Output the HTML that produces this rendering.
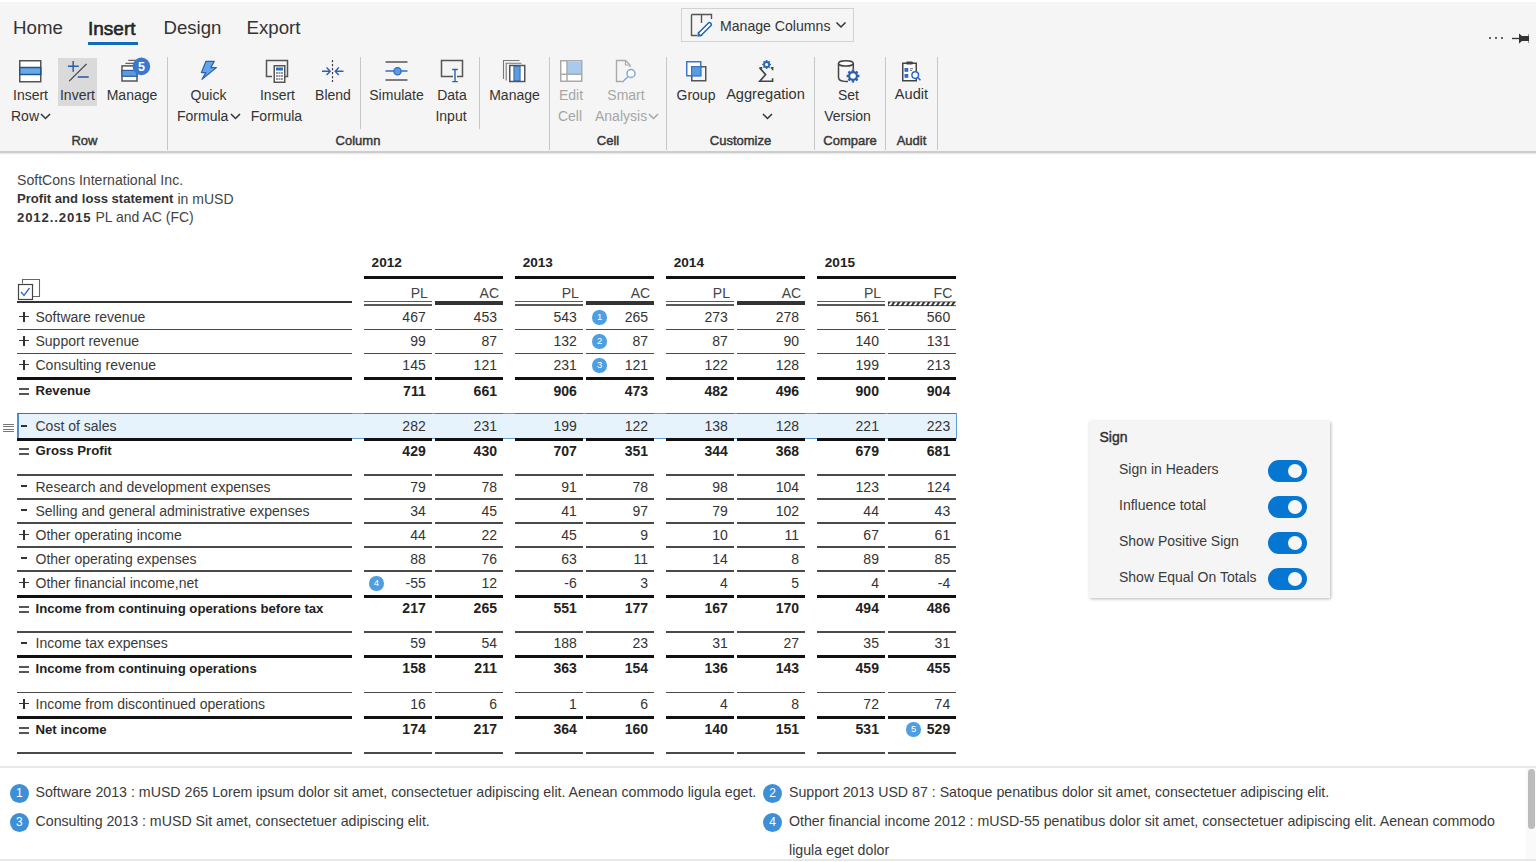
<!DOCTYPE html><html><head><meta charset="utf-8"><style>
html,body{margin:0;padding:0;}
body{width:1536px;height:862px;overflow:hidden;position:relative;background:#fff;font-family:'Liberation Sans',sans-serif;}
.t{position:absolute;white-space:nowrap;}
.r{position:absolute;display:block;}
</style></head><body>
<div class="r" style="left:0px;top:0px;width:1536px;height:151px;background:#f5f5f5;border-top:2px solid #fff;box-sizing:border-box"></div>
<div class="r" style="left:0px;top:151px;width:1536px;height:1.5px;background:#cdcdcd;"></div>
<div class="r" style="left:0px;top:152.5px;width:1536px;height:2.5px;background:linear-gradient(#e6e6e6,#fcfcfc);"></div>
<div class="t" style="left:13px;top:15.12px;font-size:18.7px;line-height:26px;color:#333;">Home</div>
<div class="t" style="left:88px;top:14.52px;font-size:19px;line-height:27px;color:#262626;-webkit-text-stroke:0.6px #262626;">Insert</div>
<div class="r" style="left:88px;top:42px;width:50px;height:3px;background:#0f6cbd;"></div>
<div class="t" style="left:163.5px;top:15.16px;font-size:18.6px;line-height:26px;color:#333;">Design</div>
<div class="t" style="left:246.5px;top:15.12px;font-size:18.7px;line-height:26px;color:#333;">Export</div>
<div class="r" style="left:681px;top:8px;width:173px;height:34px;background:transparent;border:1px solid #d2d2d2;box-sizing:border-box"></div>
<svg class="r" style="left:690px;top:13px;" width="24" height="24" viewBox="0 0 24 24"><path d="M1.5 1.5 V22.5 H7 M1.5 1.5 H21.5 V6 M11.5 1.5 V10" fill="none" stroke="#555" stroke-width="1.4"/><path d="M10.5 20.5 L19.5 11.5" stroke="#1f5fb0" stroke-width="5" stroke-linecap="round"/><path d="M10.5 20.5 L19.5 11.5" stroke="#fff" stroke-width="2.2" stroke-linecap="round"/><path d="M12.3 22.5 L8 23 L8.5 18.7" fill="none" stroke="#1f5fb0" stroke-width="1.2"/></svg>
<div class="t" style="left:720px;top:15.71px;font-size:14.1px;line-height:20px;color:#333;">Manage Columns</div>
<svg class="r" style="left:835px;top:21px;" width="12" height="8" viewBox="0 0 12 8"><path d="M1.5 1.5 L6 6 L10.5 1.5" fill="none" stroke="#333" stroke-width="1.5"/></svg>
<div class="r" style="left:1489.3px;top:37px;width:2px;height:2px;background:#333;border-radius:1px"></div>
<div class="r" style="left:1495px;top:37px;width:2px;height:2px;background:#333;border-radius:1px"></div>
<div class="r" style="left:1500.6px;top:37px;width:2px;height:2px;background:#333;border-radius:1px"></div>
<svg class="r" style="left:1511px;top:33px;" width="19" height="11" viewBox="0 0 19 11"><path d="M1 5.5 H8" stroke="#333" stroke-width="1.3"/><path d="M8 0.5 L11 3 H17.5 V1 H18 V10 H17.5 V8 H11 L8 10.5 Z" fill="#333"/></svg>
<div class="r" style="left:167px;top:57px;width:1px;height:93px;background:#c6c6c6;"></div>
<div class="r" style="left:360px;top:57px;width:1px;height:72px;background:#c6c6c6;"></div>
<div class="r" style="left:479px;top:57px;width:1px;height:72px;background:#c6c6c6;"></div>
<div class="r" style="left:549px;top:57px;width:1px;height:93px;background:#c6c6c6;"></div>
<div class="r" style="left:666px;top:57px;width:1px;height:93px;background:#c6c6c6;"></div>
<div class="r" style="left:814px;top:57px;width:1px;height:93px;background:#c6c6c6;"></div>
<div class="r" style="left:885px;top:57px;width:1px;height:93px;background:#c6c6c6;"></div>
<div class="r" style="left:937px;top:57px;width:1px;height:93px;background:#c6c6c6;"></div>
<div class="t" style="left:24.5px;width:120px;top:132.40px;font-size:13px;line-height:18px;color:#383838;text-align:center;-webkit-text-stroke:0.45px #383838;">Row</div>
<div class="t" style="left:298.0px;width:120px;top:132.40px;font-size:13px;line-height:18px;color:#383838;text-align:center;-webkit-text-stroke:0.45px #383838;">Column</div>
<div class="t" style="left:548.0px;width:120px;top:132.40px;font-size:13px;line-height:18px;color:#383838;text-align:center;-webkit-text-stroke:0.45px #383838;">Cell</div>
<div class="t" style="left:680.5px;width:120px;top:132.40px;font-size:13px;line-height:18px;color:#383838;text-align:center;-webkit-text-stroke:0.45px #383838;">Customize</div>
<div class="t" style="left:790.0px;width:120px;top:132.40px;font-size:13px;line-height:18px;color:#383838;text-align:center;-webkit-text-stroke:0.45px #383838;">Compare</div>
<div class="t" style="left:851.5px;width:120px;top:132.40px;font-size:13px;line-height:18px;color:#383838;text-align:center;-webkit-text-stroke:0.45px #383838;">Audit</div>
<svg class="r" style="left:18px;top:59px;" width="25" height="24" viewBox="0 0 25 24"><rect x="1.75" y="1.75" width="21" height="21" fill="#fff" stroke="#555" stroke-width="1.5"/><rect x="1.75" y="8.5" width="21" height="7" fill="#69a9e6" stroke="#24548f" stroke-width="1.5"/></svg>
<div class="t" style="left:13px;top:84.65px;font-size:14px;line-height:20px;color:#333;">Insert</div>
<div class="t" style="left:11px;top:106.45px;font-size:14px;line-height:20px;color:#333;">Row</div>
<svg class="r" style="left:40px;top:113px;" width="11" height="7" viewBox="0 0 11 7"><path d="M1 1 L5.5 5.5 L10 1" fill="none" stroke="#333" stroke-width="1.5"/></svg>
<div class="r" style="left:58px;top:58px;width:39px;height:48px;background:#dadada;"></div>
<svg class="r" style="left:66px;top:59px;" width="25" height="24" viewBox="0 0 25 24"><path d="M1.9 7.3 H12.8 M7.2 2 V12.7" stroke="#2a5ea8" stroke-width="1.5"/><path d="M3.2 22.1 L20.6 4.9" stroke="#444" stroke-width="1.3"/><path d="M11.8 18 H22.7" stroke="#2a5ea8" stroke-width="1.6"/></svg>
<div class="t" style="left:47.5px;width:60px;top:84.65px;font-size:14px;line-height:20px;color:#333;text-align:center;">Invert</div>
<svg class="r" style="left:119px;top:57px;" width="34" height="28" viewBox="0 0 34 28"><path d="M9.3 3.4 H17 M6.4 6.3 H16" stroke="#666" stroke-width="1.3"/><rect x="3" y="8.9" width="15" height="15.1" fill="#fff" stroke="#555" stroke-width="1.5"/><rect x="3" y="13.4" width="15" height="5.9" fill="#5b9be0" stroke="#2f5f9a" stroke-width="1.2"/><circle cx="22.4" cy="9.4" r="8.8" fill="#3a78d0"/><text x="22.6" y="13.9" text-anchor="middle" font-family="Liberation Sans" font-weight="700" font-size="12.5" fill="#fff">5</text></svg>
<div class="t" style="left:92.0px;width:80px;top:84.65px;font-size:14px;line-height:20px;color:#333;text-align:center;">Manage</div>
<svg class="r" style="left:199px;top:59px;" width="20" height="23" viewBox="0 0 20 23"><path d="M7 2.3 H15.3 L11.8 8.6 H17.4 L3 20.3 L6.8 13.6 H2.4 Z" fill="#62a6ea" stroke="#2a62b0" stroke-width="1.2" stroke-linejoin="round"/></svg>
<div class="t" style="left:168.5px;width:80px;top:84.65px;font-size:14px;line-height:20px;color:#333;text-align:center;">Quick</div>
<div class="t" style="left:177px;top:106.45px;font-size:14px;line-height:20px;color:#333;">Formula</div>
<svg class="r" style="left:230px;top:113px;" width="11" height="7" viewBox="0 0 11 7"><path d="M1 1 L5.5 5.5 L10 1" fill="none" stroke="#333" stroke-width="1.5"/></svg>
<svg class="r" style="left:265px;top:59px;" width="25" height="25" viewBox="0 0 25 25"><path d="M7 17.5 H1.5 V1.5 H22.5 V17.5 H19" fill="none" stroke="#555" stroke-width="1.5"/><rect x="9.25" y="6.75" width="10.5" height="16.5" fill="#fff" stroke="#555" stroke-width="1.5"/><rect x="11" y="8.5" width="7" height="3" fill="#2e6bc6"/><g fill="#999"><rect x="11" y="13" width="2" height="2"/><rect x="13.5" y="13" width="2" height="2"/><rect x="16" y="13" width="2" height="2"/><rect x="11" y="16" width="2" height="2"/><rect x="13.5" y="16" width="2" height="2"/><rect x="16" y="16" width="2" height="2"/><rect x="11" y="19" width="2" height="2"/><rect x="13.5" y="19" width="2" height="2"/><rect x="16" y="19" width="2" height="2"/></g></svg>
<div class="t" style="left:237.5px;width:80px;top:84.65px;font-size:14px;line-height:20px;color:#333;text-align:center;">Insert</div>
<div class="t" style="left:236.5px;width:80px;top:106.45px;font-size:14px;line-height:20px;color:#333;text-align:center;">Formula</div>
<svg class="r" style="left:320px;top:59px;" width="26" height="24" viewBox="0 0 26 24"><path d="M12.5 1 V23" stroke="#4a3a3a" stroke-width="1.2" stroke-dasharray="2.2 1.8"/><path d="M2 12.2 H10.2 M6.6 8.4 L10.2 12.2 L6.6 16" fill="none" stroke="#2a62b0" stroke-width="1.4"/><path d="M23.5 12.2 H15.2 M18.8 8.4 L15.2 12.2 L18.8 16" fill="none" stroke="#2a62b0" stroke-width="1.4"/></svg>
<div class="t" style="left:293.0px;width:80px;top:84.65px;font-size:14px;line-height:20px;color:#333;text-align:center;">Blend</div>
<svg class="r" style="left:384px;top:59px;" width="25" height="24" viewBox="0 0 25 24"><path d="M1.5 3 H23.5 M1.5 21 H23.5" stroke="#555" stroke-width="1.5"/><path d="M1.5 12 H23.5" stroke="#2e6bc6" stroke-width="1.5"/><circle cx="13.5" cy="12.2" r="3.6" fill="#5b9be0" stroke="#2e6bc6" stroke-width="1.3"/></svg>
<div class="t" style="left:356.5px;width:80px;top:84.65px;font-size:14px;line-height:20px;color:#333;text-align:center;">Simulate</div>
<svg class="r" style="left:440px;top:59px;" width="25" height="25" viewBox="0 0 25 25"><path d="M13 17.5 H1.5 V1.5 H22.5 V17.5 H17" fill="none" stroke="#555" stroke-width="1.5"/><path d="M15 10.5 V22.5 M12.2 10.5 H17.8 M12.2 22.6 H17.8" stroke="#2a62b0" stroke-width="1.4"/></svg>
<div class="t" style="left:412.0px;width:80px;top:84.65px;font-size:14px;line-height:20px;color:#333;text-align:center;">Data</div>
<div class="t" style="left:411.0px;width:80px;top:106.45px;font-size:14px;line-height:20px;color:#333;text-align:center;">Input</div>
<svg class="r" style="left:501px;top:58px;" width="27" height="26" viewBox="0 0 27 26"><path d="M2.5 21 V2.5 H18.5 M5.2 22.5 V5.2 H20.5" fill="none" stroke="#777" stroke-width="1.1"/><rect x="8.75" y="7.5" width="15" height="16" fill="#fff" stroke="#555" stroke-width="1.5"/><rect x="12.9" y="8.2" width="6.2" height="14.6" fill="#5b9be0" stroke="#2f5f9a" stroke-width="0.9"/></svg>
<div class="t" style="left:474.5px;width:80px;top:84.65px;font-size:14px;line-height:20px;color:#333;text-align:center;">Manage</div>
<svg class="r" style="left:559px;top:59px;" width="25" height="24" viewBox="0 0 25 24"><rect x="1.75" y="1.75" width="21" height="20.5" fill="#fff" stroke="#aaa" stroke-width="1.5"/><rect x="8" y="2.5" width="14" height="12.5" fill="#a8cbed"/><path d="M8 1.75 V22 M1.75 15.25 H22.5" stroke="#aaa" stroke-width="1.5"/></svg>
<div class="t" style="left:531.0px;width:80px;top:84.65px;font-size:14px;line-height:20px;color:#a6a6a6;text-align:center;">Edit</div>
<div class="t" style="left:530.0px;width:80px;top:106.45px;font-size:14px;line-height:20px;color:#a6a6a6;text-align:center;">Cell</div>
<svg class="r" style="left:614px;top:59px;" width="24" height="24" viewBox="0 0 24 24"><path d="M10 22.5 H2.5 V1.5 H11.5 L16 6 V8" fill="none" stroke="#aaa" stroke-width="1.4"/><path d="M11.5 1.5 V6 H16" fill="none" stroke="#aaa" stroke-width="1.2"/><circle cx="17" cy="14.5" r="4" fill="#fff" stroke="#7fa8d8" stroke-width="1.5"/><path d="M14 17.5 L9.5 22" stroke="#7fa8d8" stroke-width="1.5"/></svg>
<div class="t" style="left:586.0px;width:80px;top:84.65px;font-size:14px;line-height:20px;color:#a6a6a6;text-align:center;">Smart</div>
<div class="t" style="left:595px;top:106.45px;font-size:14px;line-height:20px;color:#a6a6a6;">Analysis</div>
<svg class="r" style="left:648px;top:113px;" width="11" height="7" viewBox="0 0 11 7"><path d="M1 1 L5.5 5.5 L10 1" fill="none" stroke="#a6a6a6" stroke-width="1.5"/></svg>
<svg class="r" style="left:684px;top:59px;" width="24" height="24" viewBox="0 0 24 24"><rect x="2.75" y="2.75" width="14" height="14" fill="#fff" stroke="#3a78d0" stroke-width="1.5"/><rect x="7.75" y="7.75" width="14" height="14" fill="none" stroke="#555" stroke-width="1.5"/><rect x="7.75" y="7.75" width="9" height="9" fill="#5b9be0" stroke="#3a78d0" stroke-width="1"/></svg>
<div class="t" style="left:656.0px;width:80px;top:84.65px;font-size:14px;line-height:20px;color:#333;text-align:center;">Group</div>
<svg class="r" style="left:756px;top:57px;" width="20" height="27" viewBox="0 0 20 27"><path d="M3.7 10.9 L9.6 17.6 L3.7 24.3 H16.6 V21.3" fill="none" stroke="#444" stroke-width="1.6" stroke-linejoin="miter"/><path d="M3.5 10.9 H6.2 M14.8 10.9 H16.6 V13.2" fill="none" stroke="#444" stroke-width="1.6"/><circle cx="10.6" cy="7.5" r="2.5" fill="#fff" stroke="#2b63b0" stroke-width="1.8"/><g stroke="#2b63b0" stroke-width="1.6"><path d="M10.6 3.1 V4.5 M10.6 10.5 V11.9 M6.2 7.5 H7.6 M13.6 7.5 H15 M7.5 4.4 L8.4 5.3 M12.8 9.7 L13.7 10.6 M7.5 10.6 L8.4 9.7 M12.8 5.3 L13.7 4.4"/></g></svg>
<div class="t" style="left:705.5px;width:120px;top:84.44px;font-size:14.6px;line-height:20px;color:#333;text-align:center;">Aggregation</div>
<svg class="r" style="left:762px;top:113px;" width="11" height="7" viewBox="0 0 11 7"><path d="M1 1 L5.5 5.5 L10 1" fill="none" stroke="#333" stroke-width="1.5"/></svg>
<svg class="r" style="left:836px;top:58px;" width="26" height="26" viewBox="0 0 26 26"><ellipse cx="9.9" cy="5.4" rx="7.4" ry="2.7" fill="#fff" stroke="#444" stroke-width="1.5"/><path d="M2.5 5.4 V19.5 C2.5 22.5 7 23.6 12 23.6 M17.3 5.4 V11.5" fill="none" stroke="#444" stroke-width="1.5"/><circle cx="17" cy="18" r="3.9" fill="#fff" stroke="#2a5ea8" stroke-width="2.2"/><g stroke="#2a5ea8" stroke-width="2.4"><path d="M17 11.6 V13.4 M17 22.6 V24.4 M10.6 18 H12.4 M21.6 18 H23.4 M12.5 13.5 L13.8 14.8 M20.2 21.2 L21.5 22.5 M12.5 22.5 L13.8 21.2 M20.2 14.8 L21.5 13.5"/></g></svg>
<div class="t" style="left:808.5px;width:80px;top:84.65px;font-size:14px;line-height:20px;color:#333;text-align:center;">Set</div>
<div class="t" style="left:807.5px;width:80px;top:106.45px;font-size:14px;line-height:20px;color:#333;text-align:center;">Version</div>
<svg class="r" style="left:900px;top:60px;" width="22" height="22" viewBox="0 0 22 22"><rect x="2.75" y="3.25" width="13.5" height="17.5" fill="#fff" stroke="#444" stroke-width="1.5"/><rect x="6" y="1.5" width="7" height="3" rx="1.2" fill="#444"/><rect x="4.5" y="8" width="3.8" height="3.8" fill="#2e6bc6"/><rect x="4.5" y="14" width="3.8" height="3.8" fill="#2e6bc6"/><path d="M10 8.7 H13 M10 10.5 H12" stroke="#666" stroke-width="0.9"/><circle cx="15.2" cy="15" r="3.3" fill="#fff" stroke="#2e6bc6" stroke-width="1.5"/><path d="M17.6 17.4 L20.5 20.3" stroke="#2e6bc6" stroke-width="1.6"/></svg>
<div class="t" style="left:871.5px;width:80px;top:84.44px;font-size:14.6px;line-height:20px;color:#333;text-align:center;">Audit</div>
<div class="t" style="left:17px;top:170.11px;font-size:14.1px;line-height:20px;color:#444;">SoftCons International Inc.</div>
<div class="t" style="left:17px;top:190.26px;font-size:13.1px;line-height:18px;color:#333;font-weight:700;">Profit and loss statement</div>
<div class="t" style="left:177.5px;top:188.95px;font-size:14px;line-height:20px;color:#444;">in mUSD</div>
<div class="t" style="left:17px;top:207.75px;font-size:14px;line-height:19.6px;color:#444"><b style="font-size:13.2px;color:#333;letter-spacing:0.85px">2012..2015</b> PL and AC (FC)</div>
<div class="t" style="left:371.6px;top:253.29px;font-size:13.6px;line-height:19px;color:#222;font-weight:700;">2012</div>
<div class="r" style="left:364.0px;top:276.4px;width:139.25px;height:2.6px;background:#111;"></div>
<div class="t" style="right:1108.2px;top:282.65px;font-size:14px;line-height:20px;color:#444;text-align:right;">PL</div>
<div class="t" style="right:1036.95px;top:282.65px;font-size:14px;line-height:20px;color:#444;text-align:right;">AC</div>
<div class="r" style="left:364.0px;top:301px;width:68px;height:1.2px;background:#5a5a5a;"></div>
<div class="r" style="left:364.0px;top:304.2px;width:68px;height:1.4px;background:#5a5a5a;"></div>
<div class="r" style="left:435.25px;top:300.7px;width:68px;height:4.4px;background:#333;"></div>
<div class="t" style="left:522.67px;top:253.29px;font-size:13.6px;line-height:19px;color:#222;font-weight:700;">2013</div>
<div class="r" style="left:515.0699999999999px;top:276.4px;width:139.25px;height:2.6px;background:#111;"></div>
<div class="t" style="right:957.1300000000001px;top:282.65px;font-size:14px;line-height:20px;color:#444;text-align:right;">PL</div>
<div class="t" style="right:885.8800000000001px;top:282.65px;font-size:14px;line-height:20px;color:#444;text-align:right;">AC</div>
<div class="r" style="left:515.0699999999999px;top:301px;width:68px;height:1.2px;background:#5a5a5a;"></div>
<div class="r" style="left:515.0699999999999px;top:304.2px;width:68px;height:1.4px;background:#5a5a5a;"></div>
<div class="r" style="left:586.3199999999999px;top:300.7px;width:68px;height:4.4px;background:#333;"></div>
<div class="t" style="left:673.74px;top:253.29px;font-size:13.6px;line-height:19px;color:#222;font-weight:700;">2014</div>
<div class="r" style="left:666.14px;top:276.4px;width:139.25px;height:2.6px;background:#111;"></div>
<div class="t" style="right:806.0600000000001px;top:282.65px;font-size:14px;line-height:20px;color:#444;text-align:right;">PL</div>
<div class="t" style="right:734.8100000000001px;top:282.65px;font-size:14px;line-height:20px;color:#444;text-align:right;">AC</div>
<div class="r" style="left:666.14px;top:301px;width:68px;height:1.2px;background:#5a5a5a;"></div>
<div class="r" style="left:666.14px;top:304.2px;width:68px;height:1.4px;background:#5a5a5a;"></div>
<div class="r" style="left:737.39px;top:300.7px;width:68px;height:4.4px;background:#333;"></div>
<div class="t" style="left:824.8100000000001px;top:253.29px;font-size:13.6px;line-height:19px;color:#222;font-weight:700;">2015</div>
<div class="r" style="left:817.21px;top:276.4px;width:139.25px;height:2.6px;background:#111;"></div>
<div class="t" style="right:654.99px;top:282.65px;font-size:14px;line-height:20px;color:#444;text-align:right;">PL</div>
<div class="t" style="right:583.74px;top:282.65px;font-size:14px;line-height:20px;color:#444;text-align:right;">FC</div>
<div class="r" style="left:817.21px;top:301px;width:68px;height:1.2px;background:#5a5a5a;"></div>
<div class="r" style="left:817.21px;top:304.2px;width:68px;height:1.4px;background:#5a5a5a;"></div>
<svg class="r" style="left:888.46px;top:300.5px;" width="69" height="6" viewBox="0 0 69 6"><defs><pattern id="hp" width="5" height="6" patternUnits="userSpaceOnUse"><rect width="5" height="6" fill="#333"/><path d="M0.3 4.3 L2.3 1.3 H4.9 L2.9 4.3 Z" fill="#fff"/></pattern></defs><rect x="0" y="0.5" width="68" height="4.6" fill="url(#hp)"/></svg>
<div class="r" style="left:17px;top:301px;width:335px;height:2.2px;background:#333;"></div>
<svg class="r" style="left:16px;top:277px;" width="26" height="26" viewBox="0 0 26 26"><path d="M6.5 6.5 V2.5 H23.5 V19.5 H17" fill="#fff" stroke="#666" stroke-width="1.1"/><rect x="2.5" y="7.5" width="14" height="15" fill="#fff" stroke="#444" stroke-width="1.2"/><path d="M5 15 L8 18.5 L13.5 11" fill="none" stroke="#2e6bc6" stroke-width="1.3"/></svg>
<div class="r" style="left:16.5px;top:413px;width:940.5px;height:25.5px;background:#e6f2fc;border:1px solid #5e9fd6;border-left:2px solid #4a8fd0;box-sizing:border-box"></div>
<div class="r" style="left:17px;top:329.1px;width:335px;height:1.35px;background:#4a4a4a;"></div>
<div class="r" style="left:364.0px;top:329.1px;width:68.0px;height:1.35px;background:#4a4a4a;"></div>
<div class="r" style="left:435.25px;top:329.1px;width:68.0px;height:1.35px;background:#4a4a4a;"></div>
<div class="r" style="left:515.0699999999999px;top:329.1px;width:68.0px;height:1.35px;background:#4a4a4a;"></div>
<div class="r" style="left:586.3199999999999px;top:329.1px;width:68.0px;height:1.35px;background:#4a4a4a;"></div>
<div class="r" style="left:666.14px;top:329.1px;width:68.0px;height:1.35px;background:#4a4a4a;"></div>
<div class="r" style="left:737.39px;top:329.1px;width:68.0px;height:1.35px;background:#4a4a4a;"></div>
<div class="r" style="left:817.21px;top:329.1px;width:68.0px;height:1.35px;background:#4a4a4a;"></div>
<div class="r" style="left:888.46px;top:329.1px;width:68.0px;height:1.35px;background:#4a4a4a;"></div>
<div class="r" style="left:17px;top:353.1px;width:335px;height:1.35px;background:#4a4a4a;"></div>
<div class="r" style="left:364.0px;top:353.1px;width:68.0px;height:1.35px;background:#4a4a4a;"></div>
<div class="r" style="left:435.25px;top:353.1px;width:68.0px;height:1.35px;background:#4a4a4a;"></div>
<div class="r" style="left:515.0699999999999px;top:353.1px;width:68.0px;height:1.35px;background:#4a4a4a;"></div>
<div class="r" style="left:586.3199999999999px;top:353.1px;width:68.0px;height:1.35px;background:#4a4a4a;"></div>
<div class="r" style="left:666.14px;top:353.1px;width:68.0px;height:1.35px;background:#4a4a4a;"></div>
<div class="r" style="left:737.39px;top:353.1px;width:68.0px;height:1.35px;background:#4a4a4a;"></div>
<div class="r" style="left:817.21px;top:353.1px;width:68.0px;height:1.35px;background:#4a4a4a;"></div>
<div class="r" style="left:888.46px;top:353.1px;width:68.0px;height:1.35px;background:#4a4a4a;"></div>
<div class="r" style="left:17px;top:474.2px;width:335px;height:1.35px;background:#4a4a4a;"></div>
<div class="r" style="left:364.0px;top:474.2px;width:68.0px;height:1.35px;background:#4a4a4a;"></div>
<div class="r" style="left:435.25px;top:474.2px;width:68.0px;height:1.35px;background:#4a4a4a;"></div>
<div class="r" style="left:515.0699999999999px;top:474.2px;width:68.0px;height:1.35px;background:#4a4a4a;"></div>
<div class="r" style="left:586.3199999999999px;top:474.2px;width:68.0px;height:1.35px;background:#4a4a4a;"></div>
<div class="r" style="left:666.14px;top:474.2px;width:68.0px;height:1.35px;background:#4a4a4a;"></div>
<div class="r" style="left:737.39px;top:474.2px;width:68.0px;height:1.35px;background:#4a4a4a;"></div>
<div class="r" style="left:817.21px;top:474.2px;width:68.0px;height:1.35px;background:#4a4a4a;"></div>
<div class="r" style="left:888.46px;top:474.2px;width:68.0px;height:1.35px;background:#4a4a4a;"></div>
<div class="r" style="left:17px;top:498.3px;width:335px;height:1.35px;background:#4a4a4a;"></div>
<div class="r" style="left:364.0px;top:498.3px;width:68.0px;height:1.35px;background:#4a4a4a;"></div>
<div class="r" style="left:435.25px;top:498.3px;width:68.0px;height:1.35px;background:#4a4a4a;"></div>
<div class="r" style="left:515.0699999999999px;top:498.3px;width:68.0px;height:1.35px;background:#4a4a4a;"></div>
<div class="r" style="left:586.3199999999999px;top:498.3px;width:68.0px;height:1.35px;background:#4a4a4a;"></div>
<div class="r" style="left:666.14px;top:498.3px;width:68.0px;height:1.35px;background:#4a4a4a;"></div>
<div class="r" style="left:737.39px;top:498.3px;width:68.0px;height:1.35px;background:#4a4a4a;"></div>
<div class="r" style="left:817.21px;top:498.3px;width:68.0px;height:1.35px;background:#4a4a4a;"></div>
<div class="r" style="left:888.46px;top:498.3px;width:68.0px;height:1.35px;background:#4a4a4a;"></div>
<div class="r" style="left:17px;top:522.3px;width:335px;height:1.35px;background:#4a4a4a;"></div>
<div class="r" style="left:364.0px;top:522.3px;width:68.0px;height:1.35px;background:#4a4a4a;"></div>
<div class="r" style="left:435.25px;top:522.3px;width:68.0px;height:1.35px;background:#4a4a4a;"></div>
<div class="r" style="left:515.0699999999999px;top:522.3px;width:68.0px;height:1.35px;background:#4a4a4a;"></div>
<div class="r" style="left:586.3199999999999px;top:522.3px;width:68.0px;height:1.35px;background:#4a4a4a;"></div>
<div class="r" style="left:666.14px;top:522.3px;width:68.0px;height:1.35px;background:#4a4a4a;"></div>
<div class="r" style="left:737.39px;top:522.3px;width:68.0px;height:1.35px;background:#4a4a4a;"></div>
<div class="r" style="left:817.21px;top:522.3px;width:68.0px;height:1.35px;background:#4a4a4a;"></div>
<div class="r" style="left:888.46px;top:522.3px;width:68.0px;height:1.35px;background:#4a4a4a;"></div>
<div class="r" style="left:17px;top:546.3px;width:335px;height:1.35px;background:#4a4a4a;"></div>
<div class="r" style="left:364.0px;top:546.3px;width:68.0px;height:1.35px;background:#4a4a4a;"></div>
<div class="r" style="left:435.25px;top:546.3px;width:68.0px;height:1.35px;background:#4a4a4a;"></div>
<div class="r" style="left:515.0699999999999px;top:546.3px;width:68.0px;height:1.35px;background:#4a4a4a;"></div>
<div class="r" style="left:586.3199999999999px;top:546.3px;width:68.0px;height:1.35px;background:#4a4a4a;"></div>
<div class="r" style="left:666.14px;top:546.3px;width:68.0px;height:1.35px;background:#4a4a4a;"></div>
<div class="r" style="left:737.39px;top:546.3px;width:68.0px;height:1.35px;background:#4a4a4a;"></div>
<div class="r" style="left:817.21px;top:546.3px;width:68.0px;height:1.35px;background:#4a4a4a;"></div>
<div class="r" style="left:888.46px;top:546.3px;width:68.0px;height:1.35px;background:#4a4a4a;"></div>
<div class="r" style="left:17px;top:570.4px;width:335px;height:1.35px;background:#4a4a4a;"></div>
<div class="r" style="left:364.0px;top:570.4px;width:68.0px;height:1.35px;background:#4a4a4a;"></div>
<div class="r" style="left:435.25px;top:570.4px;width:68.0px;height:1.35px;background:#4a4a4a;"></div>
<div class="r" style="left:515.0699999999999px;top:570.4px;width:68.0px;height:1.35px;background:#4a4a4a;"></div>
<div class="r" style="left:586.3199999999999px;top:570.4px;width:68.0px;height:1.35px;background:#4a4a4a;"></div>
<div class="r" style="left:666.14px;top:570.4px;width:68.0px;height:1.35px;background:#4a4a4a;"></div>
<div class="r" style="left:737.39px;top:570.4px;width:68.0px;height:1.35px;background:#4a4a4a;"></div>
<div class="r" style="left:817.21px;top:570.4px;width:68.0px;height:1.35px;background:#4a4a4a;"></div>
<div class="r" style="left:888.46px;top:570.4px;width:68.0px;height:1.35px;background:#4a4a4a;"></div>
<div class="r" style="left:17px;top:631.2px;width:335px;height:1.35px;background:#4a4a4a;"></div>
<div class="r" style="left:364.0px;top:631.2px;width:68.0px;height:1.35px;background:#4a4a4a;"></div>
<div class="r" style="left:435.25px;top:631.2px;width:68.0px;height:1.35px;background:#4a4a4a;"></div>
<div class="r" style="left:515.0699999999999px;top:631.2px;width:68.0px;height:1.35px;background:#4a4a4a;"></div>
<div class="r" style="left:586.3199999999999px;top:631.2px;width:68.0px;height:1.35px;background:#4a4a4a;"></div>
<div class="r" style="left:666.14px;top:631.2px;width:68.0px;height:1.35px;background:#4a4a4a;"></div>
<div class="r" style="left:737.39px;top:631.2px;width:68.0px;height:1.35px;background:#4a4a4a;"></div>
<div class="r" style="left:817.21px;top:631.2px;width:68.0px;height:1.35px;background:#4a4a4a;"></div>
<div class="r" style="left:888.46px;top:631.2px;width:68.0px;height:1.35px;background:#4a4a4a;"></div>
<div class="r" style="left:17px;top:691.8px;width:335px;height:1.35px;background:#4a4a4a;"></div>
<div class="r" style="left:364.0px;top:691.8px;width:68.0px;height:1.35px;background:#4a4a4a;"></div>
<div class="r" style="left:435.25px;top:691.8px;width:68.0px;height:1.35px;background:#4a4a4a;"></div>
<div class="r" style="left:515.0699999999999px;top:691.8px;width:68.0px;height:1.35px;background:#4a4a4a;"></div>
<div class="r" style="left:586.3199999999999px;top:691.8px;width:68.0px;height:1.35px;background:#4a4a4a;"></div>
<div class="r" style="left:666.14px;top:691.8px;width:68.0px;height:1.35px;background:#4a4a4a;"></div>
<div class="r" style="left:737.39px;top:691.8px;width:68.0px;height:1.35px;background:#4a4a4a;"></div>
<div class="r" style="left:817.21px;top:691.8px;width:68.0px;height:1.35px;background:#4a4a4a;"></div>
<div class="r" style="left:888.46px;top:691.8px;width:68.0px;height:1.35px;background:#4a4a4a;"></div>
<div class="r" style="left:17px;top:752.3px;width:335px;height:1.35px;background:#4a4a4a;"></div>
<div class="r" style="left:364.0px;top:752.3px;width:68.0px;height:1.35px;background:#4a4a4a;"></div>
<div class="r" style="left:435.25px;top:752.3px;width:68.0px;height:1.35px;background:#4a4a4a;"></div>
<div class="r" style="left:515.0699999999999px;top:752.3px;width:68.0px;height:1.35px;background:#4a4a4a;"></div>
<div class="r" style="left:586.3199999999999px;top:752.3px;width:68.0px;height:1.35px;background:#4a4a4a;"></div>
<div class="r" style="left:666.14px;top:752.3px;width:68.0px;height:1.35px;background:#4a4a4a;"></div>
<div class="r" style="left:737.39px;top:752.3px;width:68.0px;height:1.35px;background:#4a4a4a;"></div>
<div class="r" style="left:817.21px;top:752.3px;width:68.0px;height:1.35px;background:#4a4a4a;"></div>
<div class="r" style="left:888.46px;top:752.3px;width:68.0px;height:1.35px;background:#4a4a4a;"></div>
<div class="r" style="left:17px;top:413px;width:335px;height:1.2px;background:#4f7391;"></div>
<div class="r" style="left:364.0px;top:413px;width:68.0px;height:1.2px;background:#4f7391;"></div>
<div class="r" style="left:435.25px;top:413px;width:68.0px;height:1.2px;background:#4f7391;"></div>
<div class="r" style="left:515.0699999999999px;top:413px;width:68.0px;height:1.2px;background:#4f7391;"></div>
<div class="r" style="left:586.3199999999999px;top:413px;width:68.0px;height:1.2px;background:#4f7391;"></div>
<div class="r" style="left:666.14px;top:413px;width:68.0px;height:1.2px;background:#4f7391;"></div>
<div class="r" style="left:737.39px;top:413px;width:68.0px;height:1.2px;background:#4f7391;"></div>
<div class="r" style="left:817.21px;top:413px;width:68.0px;height:1.2px;background:#4f7391;"></div>
<div class="r" style="left:888.46px;top:413px;width:68.0px;height:1.2px;background:#4f7391;"></div>
<div class="r" style="left:17px;top:377px;width:335px;height:3.2px;background:#111;"></div>
<div class="r" style="left:364.0px;top:377px;width:68.0px;height:3.2px;background:#111;"></div>
<div class="r" style="left:435.25px;top:377px;width:68.0px;height:3.2px;background:#111;"></div>
<div class="r" style="left:515.0699999999999px;top:377px;width:68.0px;height:3.2px;background:#111;"></div>
<div class="r" style="left:586.3199999999999px;top:377px;width:68.0px;height:3.2px;background:#111;"></div>
<div class="r" style="left:666.14px;top:377px;width:68.0px;height:3.2px;background:#111;"></div>
<div class="r" style="left:737.39px;top:377px;width:68.0px;height:3.2px;background:#111;"></div>
<div class="r" style="left:817.21px;top:377px;width:68.0px;height:3.2px;background:#111;"></div>
<div class="r" style="left:888.46px;top:377px;width:68.0px;height:3.2px;background:#111;"></div>
<div class="r" style="left:17px;top:438px;width:335px;height:3.2px;background:#111;"></div>
<div class="r" style="left:364.0px;top:438px;width:68.0px;height:3.2px;background:#111;"></div>
<div class="r" style="left:435.25px;top:438px;width:68.0px;height:3.2px;background:#111;"></div>
<div class="r" style="left:515.0699999999999px;top:438px;width:68.0px;height:3.2px;background:#111;"></div>
<div class="r" style="left:586.3199999999999px;top:438px;width:68.0px;height:3.2px;background:#111;"></div>
<div class="r" style="left:666.14px;top:438px;width:68.0px;height:3.2px;background:#111;"></div>
<div class="r" style="left:737.39px;top:438px;width:68.0px;height:3.2px;background:#111;"></div>
<div class="r" style="left:817.21px;top:438px;width:68.0px;height:3.2px;background:#111;"></div>
<div class="r" style="left:888.46px;top:438px;width:68.0px;height:3.2px;background:#111;"></div>
<div class="r" style="left:17px;top:595px;width:335px;height:3.2px;background:#111;"></div>
<div class="r" style="left:364.0px;top:595px;width:68.0px;height:3.2px;background:#111;"></div>
<div class="r" style="left:435.25px;top:595px;width:68.0px;height:3.2px;background:#111;"></div>
<div class="r" style="left:515.0699999999999px;top:595px;width:68.0px;height:3.2px;background:#111;"></div>
<div class="r" style="left:586.3199999999999px;top:595px;width:68.0px;height:3.2px;background:#111;"></div>
<div class="r" style="left:666.14px;top:595px;width:68.0px;height:3.2px;background:#111;"></div>
<div class="r" style="left:737.39px;top:595px;width:68.0px;height:3.2px;background:#111;"></div>
<div class="r" style="left:817.21px;top:595px;width:68.0px;height:3.2px;background:#111;"></div>
<div class="r" style="left:888.46px;top:595px;width:68.0px;height:3.2px;background:#111;"></div>
<div class="r" style="left:17px;top:655px;width:335px;height:3.2px;background:#111;"></div>
<div class="r" style="left:364.0px;top:655px;width:68.0px;height:3.2px;background:#111;"></div>
<div class="r" style="left:435.25px;top:655px;width:68.0px;height:3.2px;background:#111;"></div>
<div class="r" style="left:515.0699999999999px;top:655px;width:68.0px;height:3.2px;background:#111;"></div>
<div class="r" style="left:586.3199999999999px;top:655px;width:68.0px;height:3.2px;background:#111;"></div>
<div class="r" style="left:666.14px;top:655px;width:68.0px;height:3.2px;background:#111;"></div>
<div class="r" style="left:737.39px;top:655px;width:68.0px;height:3.2px;background:#111;"></div>
<div class="r" style="left:817.21px;top:655px;width:68.0px;height:3.2px;background:#111;"></div>
<div class="r" style="left:888.46px;top:655px;width:68.0px;height:3.2px;background:#111;"></div>
<div class="r" style="left:17px;top:716px;width:335px;height:3.2px;background:#111;"></div>
<div class="r" style="left:364.0px;top:716px;width:68.0px;height:3.2px;background:#111;"></div>
<div class="r" style="left:435.25px;top:716px;width:68.0px;height:3.2px;background:#111;"></div>
<div class="r" style="left:515.0699999999999px;top:716px;width:68.0px;height:3.2px;background:#111;"></div>
<div class="r" style="left:586.3199999999999px;top:716px;width:68.0px;height:3.2px;background:#111;"></div>
<div class="r" style="left:666.14px;top:716px;width:68.0px;height:3.2px;background:#111;"></div>
<div class="r" style="left:737.39px;top:716px;width:68.0px;height:3.2px;background:#111;"></div>
<div class="r" style="left:817.21px;top:716px;width:68.0px;height:3.2px;background:#111;"></div>
<div class="r" style="left:888.46px;top:716px;width:68.0px;height:3.2px;background:#111;"></div>
<div class="r" style="left:19px;top:316px;width:9.75px;height:1.3px;background:#333;"></div>
<div class="r" style="left:23.25px;top:312px;width:1.3px;height:9.6px;background:#333;"></div>
<div class="t" style="left:35.5px;top:307.05px;font-size:14px;line-height:20px;color:#3a3a3a;">Software revenue</div>
<div class="t" style="right:1110.3px;top:307.05px;font-size:14px;line-height:20px;color:#333;text-align:right;">467</div>
<div class="t" style="right:1039.05px;top:307.05px;font-size:14px;line-height:20px;color:#333;text-align:right;">453</div>
<div class="t" style="right:959.23px;top:307.05px;font-size:14px;line-height:20px;color:#333;text-align:right;">543</div>
<div class="t" style="right:887.98px;top:307.05px;font-size:14px;line-height:20px;color:#333;text-align:right;">265</div>
<div class="t" style="right:808.16px;top:307.05px;font-size:14px;line-height:20px;color:#333;text-align:right;">273</div>
<div class="t" style="right:736.91px;top:307.05px;font-size:14px;line-height:20px;color:#333;text-align:right;">278</div>
<div class="t" style="right:657.0899999999999px;top:307.05px;font-size:14px;line-height:20px;color:#333;text-align:right;">561</div>
<div class="t" style="right:585.8399999999999px;top:307.05px;font-size:14px;line-height:20px;color:#333;text-align:right;">560</div>
<div class="r" style="left:19px;top:340px;width:9.75px;height:1.3px;background:#333;"></div>
<div class="r" style="left:23.25px;top:336px;width:1.3px;height:9.6px;background:#333;"></div>
<div class="t" style="left:35.5px;top:331.05px;font-size:14px;line-height:20px;color:#3a3a3a;">Support revenue</div>
<div class="t" style="right:1110.3px;top:331.05px;font-size:14px;line-height:20px;color:#333;text-align:right;">99</div>
<div class="t" style="right:1039.05px;top:331.05px;font-size:14px;line-height:20px;color:#333;text-align:right;">87</div>
<div class="t" style="right:959.23px;top:331.05px;font-size:14px;line-height:20px;color:#333;text-align:right;">132</div>
<div class="t" style="right:887.98px;top:331.05px;font-size:14px;line-height:20px;color:#333;text-align:right;">87</div>
<div class="t" style="right:808.16px;top:331.05px;font-size:14px;line-height:20px;color:#333;text-align:right;">87</div>
<div class="t" style="right:736.91px;top:331.05px;font-size:14px;line-height:20px;color:#333;text-align:right;">90</div>
<div class="t" style="right:657.0899999999999px;top:331.05px;font-size:14px;line-height:20px;color:#333;text-align:right;">140</div>
<div class="t" style="right:585.8399999999999px;top:331.05px;font-size:14px;line-height:20px;color:#333;text-align:right;">131</div>
<div class="r" style="left:19px;top:364px;width:9.75px;height:1.3px;background:#333;"></div>
<div class="r" style="left:23.25px;top:360px;width:1.3px;height:9.6px;background:#333;"></div>
<div class="t" style="left:35.5px;top:355.05px;font-size:14px;line-height:20px;color:#3a3a3a;">Consulting revenue</div>
<div class="t" style="right:1110.3px;top:355.05px;font-size:14px;line-height:20px;color:#333;text-align:right;">145</div>
<div class="t" style="right:1039.05px;top:355.05px;font-size:14px;line-height:20px;color:#333;text-align:right;">121</div>
<div class="t" style="right:959.23px;top:355.05px;font-size:14px;line-height:20px;color:#333;text-align:right;">231</div>
<div class="t" style="right:887.98px;top:355.05px;font-size:14px;line-height:20px;color:#333;text-align:right;">121</div>
<div class="t" style="right:808.16px;top:355.05px;font-size:14px;line-height:20px;color:#333;text-align:right;">122</div>
<div class="t" style="right:736.91px;top:355.05px;font-size:14px;line-height:20px;color:#333;text-align:right;">128</div>
<div class="t" style="right:657.0899999999999px;top:355.05px;font-size:14px;line-height:20px;color:#333;text-align:right;">199</div>
<div class="t" style="right:585.8399999999999px;top:355.05px;font-size:14px;line-height:20px;color:#333;text-align:right;">213</div>
<div class="r" style="left:19px;top:388px;width:9.75px;height:1.5px;background:#555;"></div>
<div class="r" style="left:19px;top:393px;width:9.75px;height:1.5px;background:#555;"></div>
<div class="t" style="left:35.5px;top:382.43px;font-size:13.2px;line-height:18px;color:#222;font-weight:700;">Revenue</div>
<div class="t" style="right:1110.3px;top:380.75px;font-size:14px;line-height:20px;color:#222;text-align:right;font-weight:700;">711</div>
<div class="t" style="right:1039.05px;top:380.75px;font-size:14px;line-height:20px;color:#222;text-align:right;font-weight:700;">661</div>
<div class="t" style="right:959.23px;top:380.75px;font-size:14px;line-height:20px;color:#222;text-align:right;font-weight:700;">906</div>
<div class="t" style="right:887.98px;top:380.75px;font-size:14px;line-height:20px;color:#222;text-align:right;font-weight:700;">473</div>
<div class="t" style="right:808.16px;top:380.75px;font-size:14px;line-height:20px;color:#222;text-align:right;font-weight:700;">482</div>
<div class="t" style="right:736.91px;top:380.75px;font-size:14px;line-height:20px;color:#222;text-align:right;font-weight:700;">496</div>
<div class="t" style="right:657.0899999999999px;top:380.75px;font-size:14px;line-height:20px;color:#222;text-align:right;font-weight:700;">900</div>
<div class="t" style="right:585.8399999999999px;top:380.75px;font-size:14px;line-height:20px;color:#222;text-align:right;font-weight:700;">904</div>
<div class="r" style="left:20.7px;top:425px;width:6.2px;height:1.6px;background:#333;"></div>
<div class="t" style="left:35.5px;top:416.15px;font-size:14px;line-height:20px;color:#3a3a3a;">Cost of sales</div>
<div class="t" style="right:1110.3px;top:416.15px;font-size:14px;line-height:20px;color:#333;text-align:right;">282</div>
<div class="t" style="right:1039.05px;top:416.15px;font-size:14px;line-height:20px;color:#333;text-align:right;">231</div>
<div class="t" style="right:959.23px;top:416.15px;font-size:14px;line-height:20px;color:#333;text-align:right;">199</div>
<div class="t" style="right:887.98px;top:416.15px;font-size:14px;line-height:20px;color:#333;text-align:right;">122</div>
<div class="t" style="right:808.16px;top:416.15px;font-size:14px;line-height:20px;color:#333;text-align:right;">138</div>
<div class="t" style="right:736.91px;top:416.15px;font-size:14px;line-height:20px;color:#333;text-align:right;">128</div>
<div class="t" style="right:657.0899999999999px;top:416.15px;font-size:14px;line-height:20px;color:#333;text-align:right;">221</div>
<div class="t" style="right:585.8399999999999px;top:416.15px;font-size:14px;line-height:20px;color:#333;text-align:right;">223</div>
<div class="r" style="left:19px;top:448px;width:9.75px;height:1.5px;background:#555;"></div>
<div class="r" style="left:19px;top:453px;width:9.75px;height:1.5px;background:#555;"></div>
<div class="t" style="left:35.5px;top:442.43px;font-size:13.2px;line-height:18px;color:#222;font-weight:700;">Gross Profit</div>
<div class="t" style="right:1110.3px;top:440.75px;font-size:14px;line-height:20px;color:#222;text-align:right;font-weight:700;">429</div>
<div class="t" style="right:1039.05px;top:440.75px;font-size:14px;line-height:20px;color:#222;text-align:right;font-weight:700;">430</div>
<div class="t" style="right:959.23px;top:440.75px;font-size:14px;line-height:20px;color:#222;text-align:right;font-weight:700;">707</div>
<div class="t" style="right:887.98px;top:440.75px;font-size:14px;line-height:20px;color:#222;text-align:right;font-weight:700;">351</div>
<div class="t" style="right:808.16px;top:440.75px;font-size:14px;line-height:20px;color:#222;text-align:right;font-weight:700;">344</div>
<div class="t" style="right:736.91px;top:440.75px;font-size:14px;line-height:20px;color:#222;text-align:right;font-weight:700;">368</div>
<div class="t" style="right:657.0899999999999px;top:440.75px;font-size:14px;line-height:20px;color:#222;text-align:right;font-weight:700;">679</div>
<div class="t" style="right:585.8399999999999px;top:440.75px;font-size:14px;line-height:20px;color:#222;text-align:right;font-weight:700;">681</div>
<div class="r" style="left:20.7px;top:485px;width:6.2px;height:1.6px;background:#333;"></div>
<div class="t" style="left:35.5px;top:476.65px;font-size:14px;line-height:20px;color:#3a3a3a;">Research and development expenses</div>
<div class="t" style="right:1110.3px;top:476.65px;font-size:14px;line-height:20px;color:#333;text-align:right;">79</div>
<div class="t" style="right:1039.05px;top:476.65px;font-size:14px;line-height:20px;color:#333;text-align:right;">78</div>
<div class="t" style="right:959.23px;top:476.65px;font-size:14px;line-height:20px;color:#333;text-align:right;">91</div>
<div class="t" style="right:887.98px;top:476.65px;font-size:14px;line-height:20px;color:#333;text-align:right;">78</div>
<div class="t" style="right:808.16px;top:476.65px;font-size:14px;line-height:20px;color:#333;text-align:right;">98</div>
<div class="t" style="right:736.91px;top:476.65px;font-size:14px;line-height:20px;color:#333;text-align:right;">104</div>
<div class="t" style="right:657.0899999999999px;top:476.65px;font-size:14px;line-height:20px;color:#333;text-align:right;">123</div>
<div class="t" style="right:585.8399999999999px;top:476.65px;font-size:14px;line-height:20px;color:#333;text-align:right;">124</div>
<div class="r" style="left:20.7px;top:509px;width:6.2px;height:1.6px;background:#333;"></div>
<div class="t" style="left:35.5px;top:500.65px;font-size:14px;line-height:20px;color:#3a3a3a;">Selling and general administrative expenses</div>
<div class="t" style="right:1110.3px;top:500.65px;font-size:14px;line-height:20px;color:#333;text-align:right;">34</div>
<div class="t" style="right:1039.05px;top:500.65px;font-size:14px;line-height:20px;color:#333;text-align:right;">45</div>
<div class="t" style="right:959.23px;top:500.65px;font-size:14px;line-height:20px;color:#333;text-align:right;">41</div>
<div class="t" style="right:887.98px;top:500.65px;font-size:14px;line-height:20px;color:#333;text-align:right;">97</div>
<div class="t" style="right:808.16px;top:500.65px;font-size:14px;line-height:20px;color:#333;text-align:right;">79</div>
<div class="t" style="right:736.91px;top:500.65px;font-size:14px;line-height:20px;color:#333;text-align:right;">102</div>
<div class="t" style="right:657.0899999999999px;top:500.65px;font-size:14px;line-height:20px;color:#333;text-align:right;">44</div>
<div class="t" style="right:585.8399999999999px;top:500.65px;font-size:14px;line-height:20px;color:#333;text-align:right;">43</div>
<div class="r" style="left:19px;top:534px;width:9.75px;height:1.3px;background:#333;"></div>
<div class="r" style="left:23.25px;top:530px;width:1.3px;height:9.6px;background:#333;"></div>
<div class="t" style="left:35.5px;top:524.65px;font-size:14px;line-height:20px;color:#3a3a3a;">Other operating income</div>
<div class="t" style="right:1110.3px;top:524.65px;font-size:14px;line-height:20px;color:#333;text-align:right;">44</div>
<div class="t" style="right:1039.05px;top:524.65px;font-size:14px;line-height:20px;color:#333;text-align:right;">22</div>
<div class="t" style="right:959.23px;top:524.65px;font-size:14px;line-height:20px;color:#333;text-align:right;">45</div>
<div class="t" style="right:887.98px;top:524.65px;font-size:14px;line-height:20px;color:#333;text-align:right;">9</div>
<div class="t" style="right:808.16px;top:524.65px;font-size:14px;line-height:20px;color:#333;text-align:right;">10</div>
<div class="t" style="right:736.91px;top:524.65px;font-size:14px;line-height:20px;color:#333;text-align:right;">11</div>
<div class="t" style="right:657.0899999999999px;top:524.65px;font-size:14px;line-height:20px;color:#333;text-align:right;">67</div>
<div class="t" style="right:585.8399999999999px;top:524.65px;font-size:14px;line-height:20px;color:#333;text-align:right;">61</div>
<div class="r" style="left:20.7px;top:557px;width:6.2px;height:1.6px;background:#333;"></div>
<div class="t" style="left:35.5px;top:548.65px;font-size:14px;line-height:20px;color:#3a3a3a;">Other operating expenses</div>
<div class="t" style="right:1110.3px;top:548.65px;font-size:14px;line-height:20px;color:#333;text-align:right;">88</div>
<div class="t" style="right:1039.05px;top:548.65px;font-size:14px;line-height:20px;color:#333;text-align:right;">76</div>
<div class="t" style="right:959.23px;top:548.65px;font-size:14px;line-height:20px;color:#333;text-align:right;">63</div>
<div class="t" style="right:887.98px;top:548.65px;font-size:14px;line-height:20px;color:#333;text-align:right;">11</div>
<div class="t" style="right:808.16px;top:548.65px;font-size:14px;line-height:20px;color:#333;text-align:right;">14</div>
<div class="t" style="right:736.91px;top:548.65px;font-size:14px;line-height:20px;color:#333;text-align:right;">8</div>
<div class="t" style="right:657.0899999999999px;top:548.65px;font-size:14px;line-height:20px;color:#333;text-align:right;">89</div>
<div class="t" style="right:585.8399999999999px;top:548.65px;font-size:14px;line-height:20px;color:#333;text-align:right;">85</div>
<div class="r" style="left:19px;top:582px;width:9.75px;height:1.3px;background:#333;"></div>
<div class="r" style="left:23.25px;top:578px;width:1.3px;height:9.6px;background:#333;"></div>
<div class="t" style="left:35.5px;top:572.65px;font-size:14px;line-height:20px;color:#3a3a3a;">Other financial income,net</div>
<div class="t" style="right:1110.3px;top:572.65px;font-size:14px;line-height:20px;color:#333;text-align:right;">-55</div>
<div class="t" style="right:1039.05px;top:572.65px;font-size:14px;line-height:20px;color:#333;text-align:right;">12</div>
<div class="t" style="right:959.23px;top:572.65px;font-size:14px;line-height:20px;color:#333;text-align:right;">-6</div>
<div class="t" style="right:887.98px;top:572.65px;font-size:14px;line-height:20px;color:#333;text-align:right;">3</div>
<div class="t" style="right:808.16px;top:572.65px;font-size:14px;line-height:20px;color:#333;text-align:right;">4</div>
<div class="t" style="right:736.91px;top:572.65px;font-size:14px;line-height:20px;color:#333;text-align:right;">5</div>
<div class="t" style="right:657.0899999999999px;top:572.65px;font-size:14px;line-height:20px;color:#333;text-align:right;">4</div>
<div class="t" style="right:585.8399999999999px;top:572.65px;font-size:14px;line-height:20px;color:#333;text-align:right;">-4</div>
<div class="r" style="left:19px;top:606px;width:9.75px;height:1.5px;background:#555;"></div>
<div class="r" style="left:19px;top:611px;width:9.75px;height:1.5px;background:#555;"></div>
<div class="t" style="left:35.5px;top:599.83px;font-size:13.2px;line-height:18px;color:#222;font-weight:700;">Income from continuing operations before tax</div>
<div class="t" style="right:1110.3px;top:598.15px;font-size:14px;line-height:20px;color:#222;text-align:right;font-weight:700;">217</div>
<div class="t" style="right:1039.05px;top:598.15px;font-size:14px;line-height:20px;color:#222;text-align:right;font-weight:700;">265</div>
<div class="t" style="right:959.23px;top:598.15px;font-size:14px;line-height:20px;color:#222;text-align:right;font-weight:700;">551</div>
<div class="t" style="right:887.98px;top:598.15px;font-size:14px;line-height:20px;color:#222;text-align:right;font-weight:700;">177</div>
<div class="t" style="right:808.16px;top:598.15px;font-size:14px;line-height:20px;color:#222;text-align:right;font-weight:700;">167</div>
<div class="t" style="right:736.91px;top:598.15px;font-size:14px;line-height:20px;color:#222;text-align:right;font-weight:700;">170</div>
<div class="t" style="right:657.0899999999999px;top:598.15px;font-size:14px;line-height:20px;color:#222;text-align:right;font-weight:700;">494</div>
<div class="t" style="right:585.8399999999999px;top:598.15px;font-size:14px;line-height:20px;color:#222;text-align:right;font-weight:700;">486</div>
<div class="r" style="left:20.7px;top:642px;width:6.2px;height:1.6px;background:#333;"></div>
<div class="t" style="left:35.5px;top:633.15px;font-size:14px;line-height:20px;color:#3a3a3a;">Income tax expenses</div>
<div class="t" style="right:1110.3px;top:633.15px;font-size:14px;line-height:20px;color:#333;text-align:right;">59</div>
<div class="t" style="right:1039.05px;top:633.15px;font-size:14px;line-height:20px;color:#333;text-align:right;">54</div>
<div class="t" style="right:959.23px;top:633.15px;font-size:14px;line-height:20px;color:#333;text-align:right;">188</div>
<div class="t" style="right:887.98px;top:633.15px;font-size:14px;line-height:20px;color:#333;text-align:right;">23</div>
<div class="t" style="right:808.16px;top:633.15px;font-size:14px;line-height:20px;color:#333;text-align:right;">31</div>
<div class="t" style="right:736.91px;top:633.15px;font-size:14px;line-height:20px;color:#333;text-align:right;">27</div>
<div class="t" style="right:657.0899999999999px;top:633.15px;font-size:14px;line-height:20px;color:#333;text-align:right;">35</div>
<div class="t" style="right:585.8399999999999px;top:633.15px;font-size:14px;line-height:20px;color:#333;text-align:right;">31</div>
<div class="r" style="left:19px;top:666px;width:9.75px;height:1.5px;background:#555;"></div>
<div class="r" style="left:19px;top:671px;width:9.75px;height:1.5px;background:#555;"></div>
<div class="t" style="left:35.5px;top:659.83px;font-size:13.2px;line-height:18px;color:#222;font-weight:700;">Income from continuing operations</div>
<div class="t" style="right:1110.3px;top:658.15px;font-size:14px;line-height:20px;color:#222;text-align:right;font-weight:700;">158</div>
<div class="t" style="right:1039.05px;top:658.15px;font-size:14px;line-height:20px;color:#222;text-align:right;font-weight:700;">211</div>
<div class="t" style="right:959.23px;top:658.15px;font-size:14px;line-height:20px;color:#222;text-align:right;font-weight:700;">363</div>
<div class="t" style="right:887.98px;top:658.15px;font-size:14px;line-height:20px;color:#222;text-align:right;font-weight:700;">154</div>
<div class="t" style="right:808.16px;top:658.15px;font-size:14px;line-height:20px;color:#222;text-align:right;font-weight:700;">136</div>
<div class="t" style="right:736.91px;top:658.15px;font-size:14px;line-height:20px;color:#222;text-align:right;font-weight:700;">143</div>
<div class="t" style="right:657.0899999999999px;top:658.15px;font-size:14px;line-height:20px;color:#222;text-align:right;font-weight:700;">459</div>
<div class="t" style="right:585.8399999999999px;top:658.15px;font-size:14px;line-height:20px;color:#222;text-align:right;font-weight:700;">455</div>
<div class="r" style="left:19px;top:703px;width:9.75px;height:1.3px;background:#333;"></div>
<div class="r" style="left:23.25px;top:699px;width:1.3px;height:9.6px;background:#333;"></div>
<div class="t" style="left:35.5px;top:693.65px;font-size:14px;line-height:20px;color:#3a3a3a;">Income from discontinued operations</div>
<div class="t" style="right:1110.3px;top:693.65px;font-size:14px;line-height:20px;color:#333;text-align:right;">16</div>
<div class="t" style="right:1039.05px;top:693.65px;font-size:14px;line-height:20px;color:#333;text-align:right;">6</div>
<div class="t" style="right:959.23px;top:693.65px;font-size:14px;line-height:20px;color:#333;text-align:right;">1</div>
<div class="t" style="right:887.98px;top:693.65px;font-size:14px;line-height:20px;color:#333;text-align:right;">6</div>
<div class="t" style="right:808.16px;top:693.65px;font-size:14px;line-height:20px;color:#333;text-align:right;">4</div>
<div class="t" style="right:736.91px;top:693.65px;font-size:14px;line-height:20px;color:#333;text-align:right;">8</div>
<div class="t" style="right:657.0899999999999px;top:693.65px;font-size:14px;line-height:20px;color:#333;text-align:right;">72</div>
<div class="t" style="right:585.8399999999999px;top:693.65px;font-size:14px;line-height:20px;color:#333;text-align:right;">74</div>
<div class="r" style="left:19px;top:727px;width:9.75px;height:1.5px;background:#555;"></div>
<div class="r" style="left:19px;top:732px;width:9.75px;height:1.5px;background:#555;"></div>
<div class="t" style="left:35.5px;top:720.83px;font-size:13.2px;line-height:18px;color:#222;font-weight:700;">Net income</div>
<div class="t" style="right:1110.3px;top:719.15px;font-size:14px;line-height:20px;color:#222;text-align:right;font-weight:700;">174</div>
<div class="t" style="right:1039.05px;top:719.15px;font-size:14px;line-height:20px;color:#222;text-align:right;font-weight:700;">217</div>
<div class="t" style="right:959.23px;top:719.15px;font-size:14px;line-height:20px;color:#222;text-align:right;font-weight:700;">364</div>
<div class="t" style="right:887.98px;top:719.15px;font-size:14px;line-height:20px;color:#222;text-align:right;font-weight:700;">160</div>
<div class="t" style="right:808.16px;top:719.15px;font-size:14px;line-height:20px;color:#222;text-align:right;font-weight:700;">140</div>
<div class="t" style="right:736.91px;top:719.15px;font-size:14px;line-height:20px;color:#222;text-align:right;font-weight:700;">151</div>
<div class="t" style="right:657.0899999999999px;top:719.15px;font-size:14px;line-height:20px;color:#222;text-align:right;font-weight:700;">531</div>
<div class="t" style="right:585.8399999999999px;top:719.15px;font-size:14px;line-height:20px;color:#222;text-align:right;font-weight:700;">529</div>
<div class="r" style="left:592.35px;top:310.25px;width:14.5px;height:14.5px;border-radius:50%;background:#4d9fe0;color:#fff;font-size:9.5px;line-height:14.5px;text-align:center;font-weight:400">1</div>
<div class="r" style="left:592.35px;top:334.25px;width:14.5px;height:14.5px;border-radius:50%;background:#4d9fe0;color:#fff;font-size:9.5px;line-height:14.5px;text-align:center;font-weight:400">2</div>
<div class="r" style="left:592.35px;top:358.25px;width:14.5px;height:14.5px;border-radius:50%;background:#4d9fe0;color:#fff;font-size:9.5px;line-height:14.5px;text-align:center;font-weight:400">3</div>
<div class="r" style="left:369.25px;top:576.05px;width:14.5px;height:14.5px;border-radius:50%;background:#4d9fe0;color:#fff;font-size:9.5px;line-height:14.5px;text-align:center;font-weight:400">4</div>
<div class="r" style="left:906.45px;top:722.15px;width:14.5px;height:14.5px;border-radius:50%;background:#4d9fe0;color:#fff;font-size:9.5px;line-height:14.5px;text-align:center;font-weight:400">5</div>
<div class="r" style="left:3px;top:423.5px;width:10.5px;height:1px;background:#777;"></div>
<div class="r" style="left:3px;top:426.1px;width:10.5px;height:1px;background:#777;"></div>
<div class="r" style="left:3px;top:428.7px;width:10.5px;height:1px;background:#777;"></div>
<div class="r" style="left:3px;top:431.3px;width:10.5px;height:1px;background:#777;"></div>
<div class="r" style="left:1089px;top:421px;width:240.5px;height:177px;background:#f5f5f5;box-shadow:1px 1px 3px rgba(0,0,0,0.28)"></div>
<div class="t" style="left:1099.5px;top:427.15px;font-size:14px;line-height:20px;color:#333;-webkit-text-stroke:0.45px #333;">Sign</div>
<div class="t" style="left:1119px;top:458.95px;font-size:14px;line-height:20px;color:#3a3a3a;">Sign in Headers</div>
<div class="r" style="left:1268px;top:460px;width:39px;height:22px;border-radius:11px;background:#0576d2"></div>
<div class="r" style="left:1287.90px;top:463.90px;width:14.2px;height:14.2px;border-radius:50%;background:#f7f7f7"></div>
<div class="t" style="left:1119px;top:494.95px;font-size:14px;line-height:20px;color:#3a3a3a;">Influence total</div>
<div class="r" style="left:1268px;top:496px;width:39px;height:22px;border-radius:11px;background:#0576d2"></div>
<div class="r" style="left:1287.90px;top:499.90px;width:14.2px;height:14.2px;border-radius:50%;background:#f7f7f7"></div>
<div class="t" style="left:1119px;top:530.95px;font-size:14px;line-height:20px;color:#3a3a3a;">Show Positive Sign</div>
<div class="r" style="left:1268px;top:532px;width:39px;height:22px;border-radius:11px;background:#0576d2"></div>
<div class="r" style="left:1287.90px;top:535.90px;width:14.2px;height:14.2px;border-radius:50%;background:#f7f7f7"></div>
<div class="t" style="left:1119px;top:566.95px;font-size:14px;line-height:20px;color:#3a3a3a;">Show Equal On Totals</div>
<div class="r" style="left:1268px;top:568px;width:39px;height:22px;border-radius:11px;background:#0576d2"></div>
<div class="r" style="left:1287.90px;top:571.90px;width:14.2px;height:14.2px;border-radius:50%;background:#f7f7f7"></div>
<div class="r" style="left:0px;top:766px;width:1536px;height:2px;background:#e8e8e8;"></div>
<div class="r" style="left:0px;top:859px;width:1536px;height:2px;background:#e8e8e8;"></div>
<div class="r" style="left:9.75px;top:783.65px;width:19.3px;height:19.3px;border-radius:50%;background:#3d8fd6;color:#fff;font-size:12px;line-height:19.3px;text-align:center;font-weight:400">1</div>
<div class="t" style="left:35.5px;top:781.68px;font-size:14.2px;line-height:20px;color:#3a3a3a;">Software 2013 : mUSD 265 Lorem ipsum dolor sit amet, consectetuer adipiscing elit. Aenean commodo ligula eget.</div>
<div class="r" style="left:9.75px;top:812.55px;width:19.3px;height:19.3px;border-radius:50%;background:#3d8fd6;color:#fff;font-size:12px;line-height:19.3px;text-align:center;font-weight:400">3</div>
<div class="t" style="left:35.5px;top:811.38px;font-size:14.2px;line-height:20px;color:#3a3a3a;">Consulting 2013 : mUSD Sit amet, consectetuer adipiscing elit.</div>
<div class="r" style="left:762.85px;top:783.65px;width:19.3px;height:19.3px;border-radius:50%;background:#3d8fd6;color:#fff;font-size:12px;line-height:19.3px;text-align:center;font-weight:400">2</div>
<div class="t" style="left:789px;top:781.68px;font-size:14.2px;line-height:20px;color:#3a3a3a;">Support 2013 USD 87 : Satoque penatibus dolor sit amet, consectetuer adipiscing elit.</div>
<div class="r" style="left:762.85px;top:812.55px;width:19.3px;height:19.3px;border-radius:50%;background:#3d8fd6;color:#fff;font-size:12px;line-height:19.3px;text-align:center;font-weight:400">4</div>
<div class="t" style="left:789px;top:811.38px;font-size:14.2px;line-height:20px;color:#3a3a3a;">Other financial income 2012 : mUSD-55 penatibus dolor sit amet, consectetuer adipiscing elit. Aenean commodo</div>
<div class="t" style="left:789px;top:840.08px;font-size:14.2px;line-height:20px;color:#3a3a3a;">ligula eget dolor</div>
<div class="r" style="left:1526px;top:768px;width:10px;height:91px;background:#fafafa;"></div>
<div class="r" style="left:1527.5px;top:769px;width:7px;height:60px;background:#bcbcbc;border-radius:4px"></div>
</body></html>
